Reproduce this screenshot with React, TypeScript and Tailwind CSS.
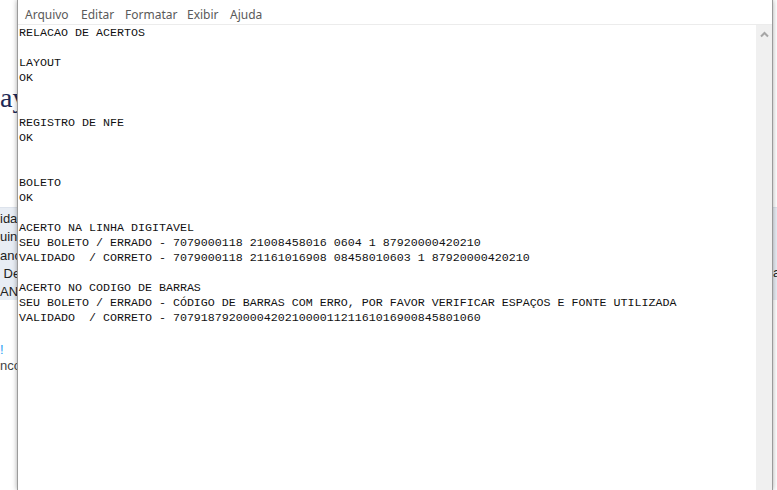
const lines = [
  "RELACAO DE ACERTOS",
  "",
  "LAYOUT",
  "OK",
  "",
  "",
  "REGISTRO DE NFE",
  "OK",
  "",
  "",
  "BOLETO",
  "OK",
  "",
  "ACERTO NA LINHA DIGITAVEL",
  "SEU BOLETO / ERRADO - 7079000118 21008458016 0604 1 87920000420210",
  "VALIDADO  / CORRETO - 7079000118 21161016908 08458010603 1 87920000420210",
  "",
  "ACERTO NO CODIGO DE BARRAS",
  "SEU BOLETO / ERRADO - CÓDIGO DE BARRAS COM ERRO, POR FAVOR VERIFICAR ESPAÇOS E FONTE UTILIZADA",
  "VALIDADO  / CORRETO - 70791879200004202100001121161016900845801060",
];

const menu = [
  { label: "Arquivo", w: "w-[56px]" },
  { label: "Editar", w: "w-[44px]" },
  { label: "Formatar", w: "w-[62px]" },
  { label: "Exibir", w: "w-[43px]" },
  { label: "Ajuda", w: "w-[40px]" },
];

// page behind the notepad window, only its edges show
const BackgroundPage = () => (
  <div className="flex h-full flex-col font-['Liberation_Sans',sans-serif] text-[13px]">
    <div className="h-[207px]">
      <p className="mt-[82px] w-[17px] overflow-hidden whitespace-nowrap font-['Liberation_Serif',serif] text-[28px] leading-[32px] text-[#1d2a57]">
        ay
      </p>
    </div>
    <div className="flex h-[93px] justify-between border-t border-[#dde3ec] bg-[#e8edf4] pt-[2px]">
      <div className="flex w-[17px] flex-col overflow-hidden whitespace-pre leading-[18.3px] text-[#222]">
        <span>ida</span>
        <span>uin</span>
        <span>anc</span>
        <span> De</span>
        <span>AN</span>
      </div>
      <div className="flex w-[4px] flex-col overflow-hidden pt-[55px] leading-[16px] text-[#222]">
        <span>a</span>
      </div>
    </div>
    <div className="mt-[42px] flex w-[17px] flex-col overflow-hidden whitespace-nowrap leading-[16px]">
      <span className="text-[#2a9df4]">!</span>
      <span className="text-[#444]">nco</span>
    </div>
  </div>
);

const Notepad = () => (
  <div className="absolute left-[17px] top-0 flex h-full w-[756px] flex-col border-x border-[#9b9b9b] bg-white shadow-[0_0_5px_rgba(0,0,0,0.35)]">
    <div className="h-[5px]" />
    <nav className="flex h-[19px] items-center pl-[7px] font-['Noto_Sans',sans-serif] text-[12px] text-[#5a5a5a]">
      {menu.map((m) => (
        <span key={m.label} className={`${m.w} leading-[19px]`}>
          {m.label}
        </span>
      ))}
    </nav>
    <div className="h-px bg-[#ececec]" />
    <div className="flex min-h-0 flex-1">
      <div className="flex-1 overflow-hidden pl-[1px] pt-[1px]">
        <pre className="font-['Liberation_Mono',monospace] text-[11.67px] leading-[15px] text-[#111]">
          {lines.map((l, i) => (
            <div key={i} className="h-[15px] whitespace-pre">
              {l}
            </div>
          ))}
        </pre>
      </div>
      <div className="flex w-[16px] flex-col bg-[#f0f0f0]">
        <div className="flex h-[17px] items-center justify-center pt-[1px]">
          <svg width="9" height="7" viewBox="0 0 9 7">
            <path d="M1 5.5 L4.5 2 L8 5.5" fill="none" stroke="#a6a6a6" strokeWidth="2" />
          </svg>
        </div>
      </div>
    </div>
  </div>
);

export default function App() {
  return (
    <div className="relative h-[490px] w-[777px] overflow-hidden bg-white">
      <BackgroundPage />
      <Notepad />
    </div>
  );
}
